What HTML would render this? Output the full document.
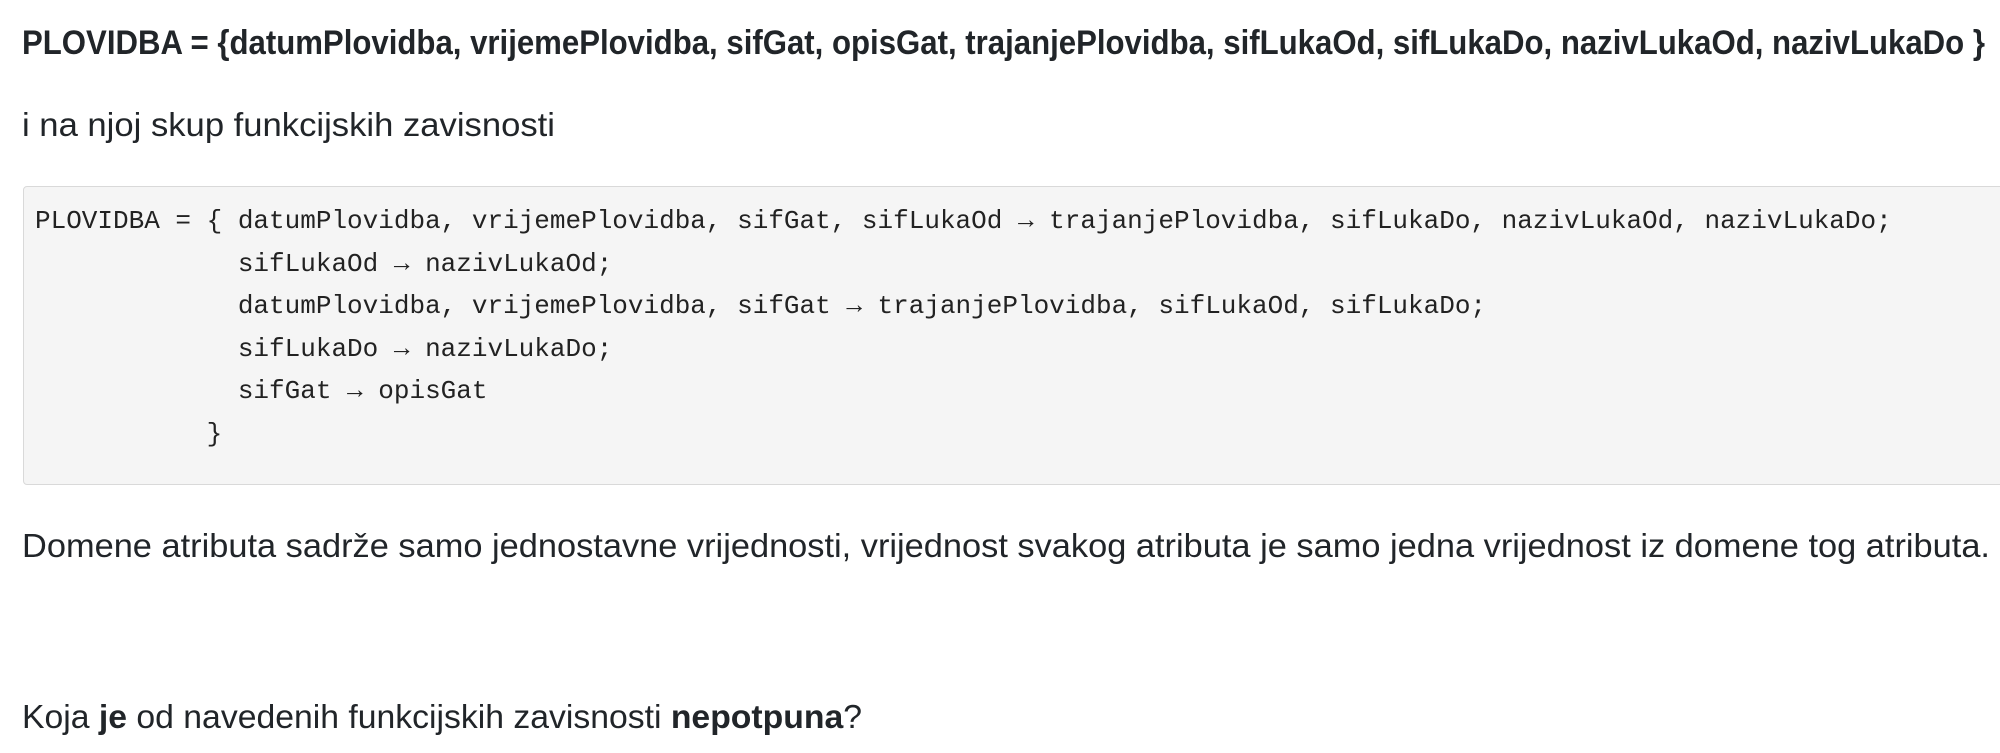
<!DOCTYPE html>
<html><head><meta charset="utf-8"><style>
html,body{margin:0;padding:0;background:#fff;width:2000px;height:753px;overflow:hidden}
body{font-family:"Liberation Sans",sans-serif;color:#212529}
.l{position:absolute;left:22px;white-space:nowrap;transform-origin:0 0}
.h{font-weight:bold;font-size:34px;top:24px}
.t{font-size:33px}
pre{position:absolute;left:23px;top:186px;width:2000px;height:299px;margin:0;box-sizing:border-box;
background:#f5f5f5;border:1.5px solid #d9d9d9;border-radius:4px;
font-family:"Liberation Mono",monospace;font-size:26px;line-height:42.5px;color:#222;padding:13px 0 0 11px}
</style></head><body>
<div class="l h" data-w="1963">PLOVIDBA = {datumPlovidba, vrijemePlovidba, sifGat, opisGat, trajanjePlovidba, sifLukaOd, sifLukaDo, nazivLukaOd, nazivLukaDo }</div>
<div class="l t" style="top:106px" data-w="533">i na njoj skup funkcijskih zavisnosti</div>
<pre>PLOVIDBA = { datumPlovidba, vrijemePlovidba, sifGat, sifLukaOd → trajanjePlovidba, sifLukaDo, nazivLukaOd, nazivLukaDo;
             sifLukaOd → nazivLukaOd;
             datumPlovidba, vrijemePlovidba, sifGat → trajanjePlovidba, sifLukaOd, sifLukaDo;
             sifLukaDo → nazivLukaDo;
             sifGat → opisGat
           }</pre>
<div class="l t" style="top:527px" data-w="1968">Domene atributa sadrže samo jednostavne vrijednosti, vrijednost svakog atributa je samo jedna vrijednost iz domene tog atributa.</div>
<div class="l t" style="top:698px" data-w="840">Koja <b>je</b> od navedenih funkcijskih zavisnosti <b>nepotpuna</b>?</div>
<script>
document.querySelectorAll('[data-w]').forEach(function(e){var w=e.getBoundingClientRect().width;e.style.transform='scaleX('+(e.dataset.w/w)+')';});
</script>
</body></html>
